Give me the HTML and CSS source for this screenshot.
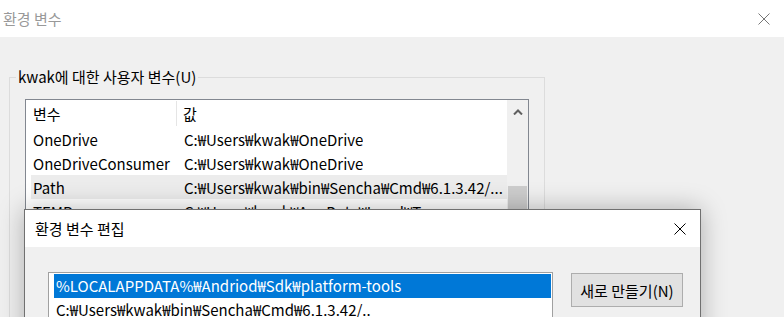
FILE: index.html
```html
<html>
<head>
<title>환경 변수</title>
<link rel="stylesheet" href="styles.css">
</head>
<body>

    <div class="window">
        <div class="titlebar">
            <span class="title">환경 변수</span>
            <svg class="close" width="12" height="12" viewBox="0 0 12 12">
                <path d="M0.5 0.5 L11.5 11.5 M11.5 0.5 L0.5 11.5" />
            </svg>
        </div>
        <div class="content">
            <fieldset class="group">
                <legend>kwak에 대한 사용자 변수(U)</legend>
                <div class="listview">
                    <div class="columns">
                        <div class="head">
                            <span class="col name">변수</span>
                            <span class="col value">값</span>
                        </div>
                        <div class="row"><span class="col name">OneDrive</span><span class="col value">C:₩Users₩kwak₩OneDrive</span></div>
                        <div class="row"><span class="col name">OneDriveConsumer</span><span class="col value">C:₩Users₩kwak₩OneDrive</span></div>
                        <div class="row selected"><span class="col name">Path</span><span class="col value">C:₩Users₩kwak₩bin₩Sencha₩Cmd₩6.1.3.42/...</span></div>
                        <div class="row"><span class="col name">TEMP</span><span class="col value">C:₩Users₩kwak₩AppData₩Local₩Temp</span></div>
                    </div>
                    <div class="scrollbar">
                        <div class="arrow">
                            <svg width="10" height="6" viewBox="0 0 10 6">
                                <path d="M1 5.5 L5 1.5 L9 5.5" />
                            </svg>
                        </div>
                        <div class="thumb"></div>
                    </div>
                </div>
            </fieldset>
        </div>
    </div>

    <div class="dialog">
        <div class="titlebar">
            <span class="title">환경 변수 편집</span>
            <svg class="close" width="12" height="12" viewBox="0 0 12 12">
                <path d="M0.5 0.5 L11.5 11.5 M11.5 0.5 L0.5 11.5" />
            </svg>
        </div>
        <div class="dialog-body">
            <div class="pathlist">
                <div class="item selected">%LOCALAPPDATA%₩Andriod₩Sdk₩platform-tools</div>
                <div class="item">C:₩Users₩kwak₩bin₩Sencha₩Cmd₩6.1.3.42/..</div>
            </div>
            <div class="buttons">
                <div class="button">새로 만들기(N)</div>
            </div>
        </div>
    </div>

</body>
</html>
```

FILE: styles.css
```css
body {
    margin: 0;
    width: 784px;
    height: 317px;
    overflow: hidden;
    background: #f0f0f0;
    font-family: "Noto Sans CJK KR", sans-serif;
    font-size: 15px;
    color: #000;
}

/* Main window */
.window {
    height: 100%;
}

.titlebar {
    height: 37px;
    background: #fff;
    display: flex;
    align-items: center;
    justify-content: space-between;
}

.window .titlebar {
    padding: 0 14px 0 3px;
}

.window .title {
    color: #999;
}

.close path {
    stroke: #000;
    stroke-width: 1;
    fill: none;
}

.window .close path {
    stroke: #777;
}

.content {
    padding: 30px 0 0 9px;
}

.group {
    margin: 0;
    width: 536px;
    height: 300px;
    box-sizing: border-box;
    border: 1px solid #dcdcdc;
    padding: 12px 0 0 15px;
}

.group legend {
    margin-left: -9px;
    padding: 0 2px;
    line-height: 20px;
}

/* List view with columns */
.listview {
    width: 504px;
    height: 300px;
    box-sizing: border-box;
    border: 1px solid #828790;
    background: #fff;
    display: flex;
}

.columns {
    flex: 1;
}

.head {
    height: 26px;
    display: flex;
    align-items: center;
    border-bottom: 1px solid #fff;
}

.head .name {
    border-right: 1px solid #e5e5e5;
    height: 25px;
    line-height: 25px;
}

.row {
    height: 24px;
    margin-left: 5px;
    display: flex;
    align-items: center;
}

.row.selected {
    background: #ececec;
}

.col {
    white-space: nowrap;
    overflow: hidden;
}

.col.name {
    width: 145px;
    padding-left: 2px;
}

.head .col.name {
    width: 143px;
    padding-left: 7px;
}

.col.value {
    padding-left: 6px;
}

.scrollbar {
    width: 21px;
    background: #f0f0f0;
}

.arrow {
    height: 24px;
    display: flex;
    align-items: center;
    justify-content: center;
}

.arrow path {
    stroke: #606060;
    stroke-width: 2;
    fill: none;
}

.thumb {
    margin: 62px 1px 0 1px;
    height: 60px;
    background: #cdcdcd;
}

/* Edit dialog, a window lying over the main one */
.dialog {
    position: absolute;
    left: 24px;
    top: 209px;
    width: 677px;
    height: 140px;
    box-sizing: border-box;
    border: 1px solid #707070;
    background: #f0f0f0;
    box-shadow: 0 0 24px rgba(0, 0, 0, 0.28);
}

.dialog .titlebar {
    height: 37px;
    padding: 0 14px 0 10px;
}

.dialog-body {
    display: flex;
    padding: 25px 0 0 23px;
    gap: 18px;
}

.pathlist {
    width: 505px;
    height: 120px;
    box-sizing: border-box;
    border: 1px solid #a0a0a0;
    background: #fff;
    padding: 1px 1px 0 5px;
}

.item {
    height: 24px;
    line-height: 24px;
    padding-left: 2px;
    white-space: nowrap;
    overflow: hidden;
}

.item.selected {
    background: #0078d7;
    color: #fff;
}

.button {
    margin-top: 1px;
    width: 112px;
    height: 34px;
    box-sizing: border-box;
    border: 1px solid #adadad;
    background: #e1e1e1;
    display: flex;
    align-items: center;
    justify-content: center;
}
```
